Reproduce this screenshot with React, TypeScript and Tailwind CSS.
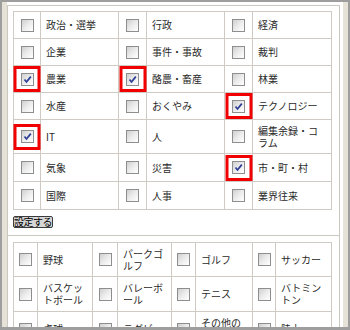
import React from "react";

type Item = { label: string; checked?: boolean };

const topRows: Item[][] = [
  [{ label: "政治・選挙" }, { label: "行政" }, { label: "経済" }],
  [{ label: "企業" }, { label: "事件・事故" }, { label: "裁判" }],
  [{ label: "農業", checked: true }, { label: "酪農・畜産", checked: true }, { label: "林業" }],
  [{ label: "水産" }, { label: "おくやみ" }, { label: "テクノロジー", checked: true }],
  [{ label: "IT", checked: true }, { label: "人" }, { label: "編集余録・コ\nラム" }],
  [{ label: "気象" }, { label: "災害" }, { label: "市・町・村", checked: true }],
  [{ label: "国際" }, { label: "人事" }, { label: "業界往来" }],
];

const sportRows: Item[][] = [
  [{ label: "野球" }, { label: "パークゴ\nルフ" }, { label: "ゴルフ" }, { label: "サッカー" }],
  [{ label: "バスケッ\nトボール" }, { label: "バレーボ\nール" }, { label: "テニス" }, { label: "バトミン\nトン" }],
  [{ label: "卓球" }, { label: "ラグビー" }, { label: "その他の\nスポーツ" }, { label: "陸上" }],
];

function Box({ checked }: { checked?: boolean }) {
  return (
    <div className="relative flex items-center justify-center">
      <div className="flex h-[13px] w-[13px] items-center justify-center border border-[#8e8e8e] bg-linear-to-br from-[#cfcfcf] via-[#ececec] to-white">
        {checked && (
          <svg width="11" height="11" viewBox="0 0 11 11">
            <path d="M2.5 5.5 L4.5 8 L8.8 2.6" fill="none" stroke="#2c3d96" strokeWidth="1.7" />
          </svg>
        )}
      </div>
      {checked && (
        <div className="pointer-events-none absolute left-1/2 top-1/2 h-[26px] w-[27px] -translate-x-1/2 -translate-y-1/2 border-[3px] border-[#f00000]" />
      )}
    </div>
  );
}

function Grid({ rows, cols, heights }: { rows: Item[][]; cols: string; heights: string }) {
  return (
    <div className={`grid w-[319px] gap-px border border-[#cfcbc4] bg-[#cfcbc4] ${cols} ${heights}`}>
      {rows.flatMap((row, r) =>
        row.flatMap((it, c) => [
          <div key={`${r}-${c}-b`} className="flex items-center justify-center bg-white">
            <Box checked={it.checked} />
          </div>,
          <div
            key={`${r}-${c}-l`}
            className="flex items-center whitespace-pre-line bg-white pl-[5px] text-[10px] leading-[12px] text-[#2a2a2a]"
          >
            {it.label}
          </div>,
        ]),
      )}
    </div>
  );
}

export default function App() {
  return (
    <div
      className="flex h-[330px] w-[350px] overflow-hidden bg-[#9e9e9e] px-[2px] pb-[3px] pt-[2px]"
      style={{ fontFamily: '"Noto Sans CJK JP", "Noto Sans", sans-serif' }}
    >
      <div className="w-[5px] bg-[#e6e2d7]" />
      <div className="flex w-[336px] flex-col overflow-hidden bg-white pt-[3px]">
        <div className="flex w-[333px] flex-col border-l border-r border-t border-[#cbc8c2]">
          <div className="flex flex-col items-start border-b border-[#cbc8c2] px-[5px] pb-[7px] pt-[5px]">
            <Grid
              rows={topRows}
              cols="grid-cols-[26px_77px_27px_77px_27px_78px]"
              heights="grid-rows-[26px_26px_26px_26px_33px_27px_27px]"
            />
            <button
              type="button"
              className="mt-[6px] h-[12px] rounded-[2px] border border-[#3c3c3c] bg-[#d6d6d6] px-0 text-[10px] leading-[10px] tracking-[-0.5px] text-black"
            >
              設定する
            </button>
          </div>
          <div className="px-[5px] pt-[6px]">
            <Grid
              rows={sportRows}
              cols="grid-cols-[23px_54px_24px_53px_23px_56px_22px_55px]"
              heights="grid-rows-[33px_34px_34px]"
            />
          </div>
        </div>
      </div>
      <div className="w-[5px] bg-[#e6e2d7]" />
    </div>
  );
}
